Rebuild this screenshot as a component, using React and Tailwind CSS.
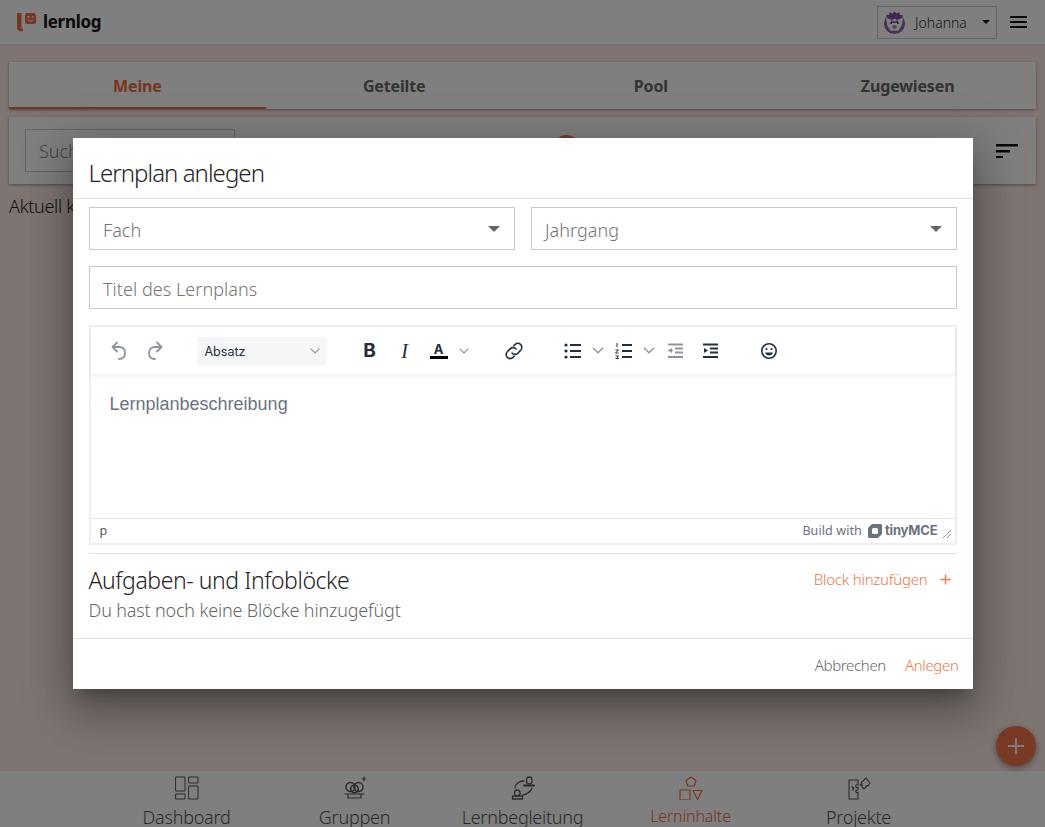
const font = { fontFamily: '"Noto Sans", sans-serif' };

function Stroke({ className = "", children, vb = "0 0 24 24", sw = 1.5 }) {
  return (
    <svg viewBox={vb} fill="none" stroke="currentColor" strokeWidth={sw} strokeLinecap="round" strokeLinejoin="round" className={className}>
      {children}
    </svg>
  );
}

function Chevron({ className = "" }) {
  return (
    <svg viewBox="0 0 10 6" fill="none" stroke="currentColor" strokeWidth="1.2" className={"w-[10px] h-[6px] " + className}>
      <path d="M.6.6 5 5 9.400.6" />
    </svg>
  );
}

function Logo() {
  return (
    <svg viewBox="0 0 19 19" className="w-[19px] h-[19px]">
      <path d="M0 0h4.500v14.500c0 1 .6 1.200 1.600 1.200V18C2.500 18.800 0 17.500 0 14.500z" fill="#ec6a3a" />
      <rect x="8" y="0" width="11" height="11" rx="2.500" fill="#ec6a3a" />
      <circle cx="11.300" cy="3.800" r="1" fill="#ffffff" />
      <circle cx="15.700" cy="3.800" r="1" fill="#ffffff" />
      <path d="M10.500 6.800c1.700 1.600 4.300 1.600 6 0" stroke="#ffffff" strokeWidth="1" fill="none" />
    </svg>
  );
}

function Avatar() {
  return (
    <svg viewBox="0 0 24 24" className="w-[23px] h-[23px]">
      <circle cx="12" cy="13" r="11" fill="#8f5fb5" />
      <path d="M12 0l2 3 3-2 .5 3.500 3-.5-1 5H4.500l-1-5 3 .5L7 1l3 2z" fill="#7d4fa3" />
      <path d="M3 7l6.500 2.500L12 8l2.500 1.500L21 7l-1.500 8-3.500 5.500H8L4.500 15z" fill="#ffffff" />
      <path d="M8 9.500l4 1.500 4-1.500-1 3H9z" fill="#8f5fb5" />
      <circle cx="8.500" cy="12.500" r="1" fill="#3b2a4c" />
      <circle cx="15.500" cy="12.500" r="1" fill="#3b2a4c" />
      <ellipse cx="12" cy="16.500" rx="2.300" ry="2" fill="#a18aa8" />
    </svg>
  );
}

function NavIcon({ name }) {
  const cls = "w-[24px] h-[24px] shrink-0";
  if (name === "dash")
    return (
      <Stroke className={cls} sw="1">
        <rect x="1" y="1" width="9" height="14" />
        <rect x="14" y="1" width="9" height="6" />
        <rect x="1" y="18" width="9" height="5" />
        <rect x="14" y="10" width="9" height="13" />
      </Stroke>
    );
  if (name === "group")
    return (
      <Stroke className={cls} sw="1.500">
        <circle cx="7.500" cy="11" r="4.500" />
        <circle cx="15.500" cy="11" r="4.500" />
        <circle cx="11.500" cy="13" r="3.800" />
        <path d="M2 18h19M5 22h13M5 18v4M18 18v4" strokeWidth="1.200" />
        <path d="M21 1v4M19 3h4" strokeWidth="1" />
      </Stroke>
    );
  if (name === "beg")
    return (
      <Stroke className={cls} sw="1.300">
        <rect x="15.500" y="1" width="5.500" height="7" rx="2.750" />
        <path d="M13 9.500h10" strokeWidth="2" />
        <rect x="3.500" y="14" width="5.500" height="6" rx="2.750" />
        <path d="M1.500 23h10v-3h-10z" />
        <path d="M4 12c0-4 4-7 9-7M21 12c-1 3-5 6-9 7" />
      </Stroke>
    );
  if (name === "inhalt")
    return (
      <Stroke className={cls} sw="1.100">
        <path d="M12 1l5 3.500L15.200 10H8.800L7 4.500z" />
        <rect x="1" y="14" width="10" height="10" />
        <path d="M14 14.500h9l-4.500 9z" />
      </Stroke>
    );
  return (
    <Stroke className={cls} sw="1.100">
      <path d="M2 4h9v5c-2-1-3 1-2 2s2 1 2 0v3c-2 0-3 1-2 2s2 1 2 0v7H2z" />
      <path d="M13 9l2-1c-1-2 0-3 1-3l3-3 4 5-2 3c-1-1-2 0-2 1l-2 2-2-2c1-1 0-2-1-2z" />
      <path d="M5 11c1 0 2 1 1 3" strokeWidth="1.500" />
    </Stroke>
  );
}

function NavItem({ icon, label, active }) {
  return (
    <div className={"w-[168px] flex flex-col items-center pt-[5px] " + (active ? "text-[#ec6a3a]" : "text-[#555]")}>
      <NavIcon name={icon} />
      <span className={"shrink-0 leading-[24px] font-light " + (active ? "text-[16px] mt-[4px] tracking-[-0.15px]" : "text-[18px] mt-[5px] tracking-[-0.25px]")}>{label}</span>
    </div>
  );
}

function Tab({ label, active }) {
  return (
    <div className={"flex-1 flex items-center justify-center pt-[2px] text-[16px] font-bold border-b-2 tracking-[-0.15px] " + (active ? "text-[#ec6a3a] border-[#ec6a3a]" : "text-[#666] border-transparent")}>
      {label}
    </div>
  );
}

function Field({ label, caret, className = "" }) {
  return (
    <div className={"h-[43px] border border-[#c8c8c8] flex items-center justify-between pl-[13.500px] pr-[14px] pt-[3px] " + className}>
      <span className="text-[18px] font-light text-[#757575] tracking-[0.05px]">{label}</span>
      {caret && <span className="block -mt-[3px] w-0 h-0 border-l-[6px] border-r-[6px] border-t-[6px] border-l-transparent border-r-transparent border-t-[#666]" />}
    </div>
  );
}

function ToolIcon({ children, className = "" }) {
  return (
    <svg viewBox="0 0 24 24" className={"w-[24px] h-[24px] " + className}>
      {children}
    </svg>
  );
}

function Toolbar() {
  const dark = "text-[#222f3e]";
  const off = "text-[#8f959c]";
  return (
    <div className="h-[47px] shrink-0 flex items-center pl-[16px] shadow-[0_2px_4px_rgba(34,47,62,0.08)] relative">
      <ToolIcon className={off}>
        <path d="M6.400 8H12c3.700 0 6 2.300 6 6s-2.300 6-6 6" fill="none" stroke="currentColor" strokeWidth="1.800" strokeLinecap="round" />
        <path d="M10 3.500 5.500 8l4.500 4.500" fill="none" stroke="currentColor" strokeWidth="1.800" strokeLinecap="round" strokeLinejoin="round" />
      </ToolIcon>
      <ToolIcon className={off + " ml-[12px]"}>
        <path d="M17.600 8H12c-3.700 0-6 2.300-6 6s2.300 6 6 6" fill="none" stroke="currentColor" strokeWidth="1.800" strokeLinecap="round" />
        <path d="M14 3.500 18.500 8 14 12.500" fill="none" stroke="currentColor" strokeWidth="1.800" strokeLinecap="round" strokeLinejoin="round" />
      </ToolIcon>
      <div className="ml-[30px] w-[130px] h-[28px] rounded-[3px] bg-[#f5f6f7] flex items-center justify-between pl-[8px] pr-[7px] text-[#222f3e] text-[12.500px]" style={{ fontFamily: "Inter, sans-serif" }}>
        <span className="mt-[3px]">Absatz</span>
        <Chevron className={off} />
      </div>
      <span className={"ml-[31px] w-[24px] text-center text-[19px] leading-[24px] font-bold " + dark} style={{ fontFamily: "Inter, sans-serif" }}>B</span>
      <span className={"ml-[11px] w-[24px] text-center text-[20px] leading-[24px] italic " + dark} style={{ fontFamily: '"Liberation Serif", serif' }}>I</span>
      <div className="ml-[10px] w-[24px] flex flex-col items-center">
        <span className={"text-[13px] leading-[14px] font-bold " + dark} style={{ fontFamily: "Inter, sans-serif" }}>A</span>
        <span className="block w-[18px] h-[3px] bg-black" />
      </div>
      <Chevron className={off + " ml-[8px]"} />
      <ToolIcon className={dark + " ml-[33px]"}>
        <path d="M10 14a4 4 0 0 0 5.700.3l3-3a4 4 0 0 0-5.700-5.700l-1.200 1.200" fill="none" stroke="currentColor" strokeWidth="1.600" strokeLinecap="round" />
        <path d="M14 10a4 4 0 0 0-5.700-.3l-3 3a4 4 0 0 0 5.700 5.700l1.200-1.200" fill="none" stroke="currentColor" strokeWidth="1.600" strokeLinecap="round" />
      </ToolIcon>
      <ToolIcon className={dark + " ml-[35px]"}>
        <path d="M9 6h11M9 12h11M9 18h11" stroke="currentColor" strokeWidth="1.800" />
        <circle cx="5" cy="6" r="1.600" fill="currentColor" />
        <circle cx="5" cy="12" r="1.600" fill="currentColor" />
        <circle cx="5" cy="18" r="1.600" fill="currentColor" />
      </ToolIcon>
      <Chevron className={off + " ml-[7px] w-[12px] h-[7px]"} />
      <ToolIcon className={dark + " ml-[8px]"}>
        <path d="M10 6h10M10 12h10M10 18h10" stroke="currentColor" strokeWidth="1.800" />
        <path d="M5 4v4M3.500 11h3l-3 3h3M3.500 17h3l-1.500 1 1.500 1.500h-3" stroke="currentColor" strokeWidth="1" fill="none" />
      </ToolIcon>
      <Chevron className={off + " ml-[7px] w-[12px] h-[7px]"} />
      <ToolIcon className={off + " ml-[8px]"}>
        <path d="M5 5.500h15M12 9.500h8M12 13.500h8M5 18h15" stroke="currentColor" strokeWidth="1.800" />
        <path d="M9 9 5 11.500 9 14z" fill="currentColor" />
        <path d="M5 11.500h5" stroke="currentColor" />
      </ToolIcon>
      <ToolIcon className={dark + " ml-[11px]"}>
        <path d="M5 5.500h15M12 9.500h8M12 13.500h8M5 18h15" stroke="currentColor" strokeWidth="1.800" />
        <path d="M6 9l4 2.500L6 14z" fill="currentColor" />
      </ToolIcon>
      <ToolIcon className={dark + " ml-[35px]"}>
        <circle cx="12" cy="12" r="7.200" fill="none" stroke="currentColor" strokeWidth="1.600" />
        <circle cx="9.500" cy="10" r="1.100" fill="currentColor" />
        <circle cx="14.500" cy="10" r="1.100" fill="currentColor" />
        <path d="M8 13.500h8c-.6 2-2 3-4 3s-3.400-1-4-3z" fill="currentColor" />
      </ToolIcon>
    </div>
  );
}

function Editor() {
  return (
    <div className="mt-[16px] h-[220px] border-2 border-[#eeeeee] flex flex-col">
      <Toolbar />
      <div className="flex-1 pl-[19px] pt-[18px] text-[18px] leading-[24px] text-[#6b7280]" style={{ fontFamily: '"Liberation Sans", sans-serif' }}>
        Lernplanbeschreibung
      </div>
      <div className="h-[25px] border-t border-[#e3e3e3] flex items-center justify-between pl-[9px] pr-[3px] text-[12.500px] text-[#6b7280] tracking-[0.3px]">
        <span className="text-[#555]">p</span>
        <div className="flex items-center">
          <span className="tracking-[0.1px]">Build with</span>
          <svg viewBox="0 0 14 14" className="w-[14px] h-[14px] ml-[6px]">
            <path d="M4 0h8.500A1.500 1.500 0 0 1 14 1.500V10l-4 4H1.500A1.500 1.500 0 0 1 0 12.500V4z" fill="#6b7280" />
            <rect x="4" y="4" width="6" height="6" rx="1.500" fill="#fff" />
          </svg>
          <span className="font-bold text-[13px] ml-[3px] tracking-[-0.15px]" style={{ fontFamily: "Inter, sans-serif" }}>tinyMCE</span>
          <svg viewBox="0 0 10 10" className="w-[10px] h-[10px] ml-[4px] mt-[5px]" stroke="#8f959c" strokeWidth="1">
            <path d="M1 9 9 1M5 9l4-4" />
          </svg>
        </div>
      </div>
    </div>
  );
}

function Modal() {
  return (
    <div className="w-[900px] h-[551px] bg-white shadow-[0_11px_15px_-7px_rgba(0,0,0,0.25),0_24px_38px_3px_rgba(0,0,0,0.2),0_9px_46px_8px_rgba(0,0,0,0.18)] flex flex-col">
      <div className="h-[61px] border-b border-[#e0e0e0] pl-[16px] pt-[19px] text-[24px] leading-[32px] font-light text-[#222] tracking-[-0.95px]">
        Lernplan anlegen
      </div>
      <div className="flex-1 px-[16px] pt-[8px] flex flex-col">
        <div className="flex gap-[16px]">
          <Field label="Fach" caret className="flex-1" />
          <Field label="Jahrgang" caret className="flex-1" />
        </div>
        <Field label="Titel des Lernplans" className="mt-[16px]" />
        <Editor />
        <div className="mt-[8px] border-t border-[#e0e0e0] pt-[11px] flex justify-between items-start">
          <div>
            <div className="text-[23px] leading-[30px] font-light text-[#222] tracking-[-0.42px]">Aufgaben- und Infoblöcke</div>
            <div className="text-[18px] leading-[24px] font-light text-[#666] tracking-[-0.17px] mt-[3px]">Du hast noch keine Blöcke hinzugefügt</div>
          </div>
          <div className="flex items-center text-[#f0754a] text-[15px] font-light pr-[6px] pt-[2px] leading-[24px]">
            <span className="tracking-[-0.22px]">Block hinzufügen</span>
            <svg viewBox="0 0 12 12" className="w-[11px] h-[11px] ml-[12px]" stroke="currentColor" strokeWidth="1.500"><path d="M6 .5v11M.5 6h11" /></svg>
          </div>
        </div>
      </div>
      <div className="h-[51px] border-t border-[#e0e0e0] flex items-center justify-end pr-[14px] pt-[2px] text-[15px] font-light tracking-[-0.35px]">
        <span className="text-[#666]">Abbrechen</span>
        <span className="text-[#f0754a] ml-[19px]">Anlegen</span>
      </div>
    </div>
  );
}

export default function App() {
  return (
    <div className="relative w-full h-[827px] overflow-hidden bg-[#fdebe6] flex flex-col text-[#222]" style={font}>
      <header className="h-[46px] shrink-0 bg-white border-b-2 border-[#e6e6e6] flex items-center pl-[17px] pr-[18px] justify-between">
        <div className="flex items-center gap-[7px]">
          <Logo />
          <span className="text-[17px] font-bold text-[#111] tracking-[-0.3px]">lernlog</span>
        </div>
        <div className="flex items-center gap-[13px]">
          <div className="w-[120px] h-[33px] border border-[#c8c8c8] flex items-center pl-[5px] pr-[6px]">
            <Avatar />
            <span className="ml-[9px] text-[14px] font-light text-[#333] flex-1">Johanna</span>
            <span className="block w-0 h-0 border-l-[4px] border-r-[4px] border-t-[4px] border-l-transparent border-r-transparent border-t-[#111]" />
          </div>
          <svg viewBox="0 0 17 12" className="w-[17px] h-[12px]" fill="#111"><rect width="17" height="2" /><rect y="5" width="17" height="2" /><rect y="10" width="17" height="2" /></svg>
        </div>
      </header>
      <main className="flex-1 pt-[16px] px-[9px] flex flex-col">
        <div className="h-[47px] flex bg-white shadow-[0_1px_3px_rgba(0,0,0,0.4)]">
          <Tab label="Meine" active />
          <Tab label="Geteilte" />
          <Tab label="Pool" />
          <Tab label="Zugewiesen" />
        </div>
        <div className="mt-[8px] h-[67px] bg-white shadow-[0_1px_3px_rgba(0,0,0,0.4)] flex items-center justify-between pl-[16px] pr-[18px] relative">
          <div className="w-[210px] h-[43px] border border-[#c8c8c8] flex items-center pl-[13px] pt-[2px] text-[18px] font-light text-[#888]">Suche</div>
          <span className="absolute left-[544px] top-[18px] w-[27px] h-[27px] rounded-full bg-[#f0754a]" />
          <svg viewBox="0 0 22 14" className="w-[22px] h-[14px]" fill="#111"><rect width="22" height="2.500" /><rect y="6" width="14" height="2.500" /><rect y="12" width="7" height="2.500" /></svg>
        </div>
        <div className="mt-[9px] text-[18px] leading-[26px] font-light tracking-[-0.3px]">Aktuell keine Lernpläne</div>
      </main>
      <footer className="h-[57px] shrink-0 bg-white border-t border-[#f0e0db] flex justify-center overflow-hidden">
        <NavItem icon="dash" label="Dashboard" />
        <NavItem icon="group" label="Gruppen" />
        <NavItem icon="beg" label="Lernbegleitung" />
        <NavItem icon="inhalt" label="Lerninhalte" active />
        <NavItem icon="proj" label="Projekte" />
      </footer>
      <div className="absolute right-[9px] bottom-[61px] w-[40px] h-[40px] rounded-full bg-[#f0754a] shadow-[0_2px_6px_rgba(0,0,0,0.4)] flex items-center justify-center text-white">
        <svg viewBox="0 0 16 16" className="w-[16px] h-[16px]" stroke="currentColor" strokeWidth="1.800"><path d="M8 0v16M0 8h16" /></svg>
      </div>
      <div className="absolute inset-0 bg-black/50 flex justify-center items-start pt-[138px]">
        <Modal />
      </div>
    </div>
  );
}
